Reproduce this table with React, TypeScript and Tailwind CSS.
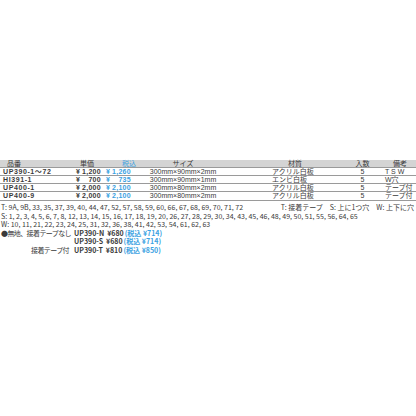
const rows = [
  { code: "UP390-1～72", price: "1,200", tax: "1,260", size: "300mm×90mm×2mm", mat: "アクリル白板", qty: "5", note: "T S W" },
  { code: "HI391-1", price: "700", tax: "735", size: "300mm×90mm×1mm", mat: "エンビ白板", qty: "5", note: "W穴" },
  { code: "UP400-1", price: "2,000", tax: "2,100", size: "300mm×80mm×2mm", mat: "アクリル白板", qty: "5", note: "テープ付" },
  { code: "UP400-9", price: "2,000", tax: "2,100", size: "300mm×80mm×2mm", mat: "アクリル白板", qty: "5", note: "テープ付" },
];

const plain = [
  { label: "●無地、接着テープなし", code: "UP390-N", price: "¥680", tax: "¥714" },
  { label: "", code: "UP390-S", price: "¥680", tax: "¥714" },
  { label: "接着テープ付", code: "UP390-T", price: "¥810", tax: "¥850" },
];

const cols = "grid grid-cols-[62px_40px_36px_90px_112px_45px_31px]";

export default function App() {
  return (
    <div
      className="w-[416px] h-[416px] bg-white text-[#3a3a3a] text-[7px] pt-[160px]"
      style={{ fontFamily: '"Noto Sans CJK JP", "Noto Sans", sans-serif' }}
    >
      {/* table */}
      <div
        className="border-b border-[#9a9a9a]"
        style={{ fontFamily: '"Liberation Sans", "Noto Sans CJK JP", sans-serif' }}
      >
        <div className={`${cols} bg-[#d4d4d4] h-[8px] leading-[8px] border-b border-[#9a9a9a]`}>
          <span className="pl-[7px]">品番</span>
          <span className="text-right pr-[8px]">単価</span>
          <span className="pl-[20px] text-[#3ba2e2]">税込</span>
          <span className="text-center">サイズ</span>
          <span className="pl-[60px]">材質</span>
          <span className="text-center">入数</span>
          <span className="pl-[8px]">備考</span>
        </div>
        {rows.map((r, i) => (
          <div
            key={i}
            className={`${cols} h-[8px] leading-[8px] ${i < rows.length - 1 ? "border-b border-[#9a9a9a]" : ""}`}
          >
            <span className="pl-[3px] font-bold tracking-[0.6px] whitespace-nowrap">{r.code}</span>
            <span className="flex justify-end pr-[1px] font-bold tracking-[0.3px]">
              <span className="flex justify-between w-[25px]">
                <span>¥</span>
                <span>{r.price}</span>
              </span>
            </span>
            <span className="pl-[4px] font-bold text-[#3ba2e2] tracking-[0.3px]">
              <span className="flex justify-between w-[25px]">
                <span>¥</span>
                <span>{r.tax}</span>
              </span>
            </span>
            <span className="text-center">{r.size}</span>
            <span className="pl-[44px]">{r.mat}</span>
            <span className="text-center">{r.qty}</span>
            <span>{r.note}</span>
          </div>
        ))}
      </div>

      {/* number lists */}
      <div className="mt-[2px] leading-[8.5px] pl-[1px]">
        <div className="flex justify-between pr-[2px]">
          <span>T: 9A, 9B, 33, 35, 37, 39, 40, 44, 47, 52, 57, 58, 59, 60, 66, 67, 68, 69, 70, 71, 72</span>
          <span>T: 接着テープ　S: 上に1つ穴　W: 上下に穴</span>
        </div>
        <div>S: 1, 2, 3, 4, 5, 6, 7, 8, 12, 13, 14, 15, 16, 17, 18, 19, 20, 26, 27, 28, 29, 30, 34, 43, 45, 46, 48, 49, 50, 51, 55, 56, 64, 65</div>
        <div>W: 10, 11, 21, 22, 23, 24, 25, 31, 32, 36, 38, 41, 42, 53, 54, 61, 62, 63</div>

        {plain.map((p, i) => (
          <div key={i} className="flex whitespace-nowrap">
            <span className="w-[68px] text-right tracking-[-0.6px]">{p.label}</span>
            <span className="ml-[5px] font-bold">{p.code}</span>
            <span className="ml-[3px] font-bold">{p.price}</span>
            <span className="ml-[1px] font-bold text-[#3ba2e2]">(税込 {p.tax})</span>
          </div>
        ))}
      </div>
    </div>
  );
}
